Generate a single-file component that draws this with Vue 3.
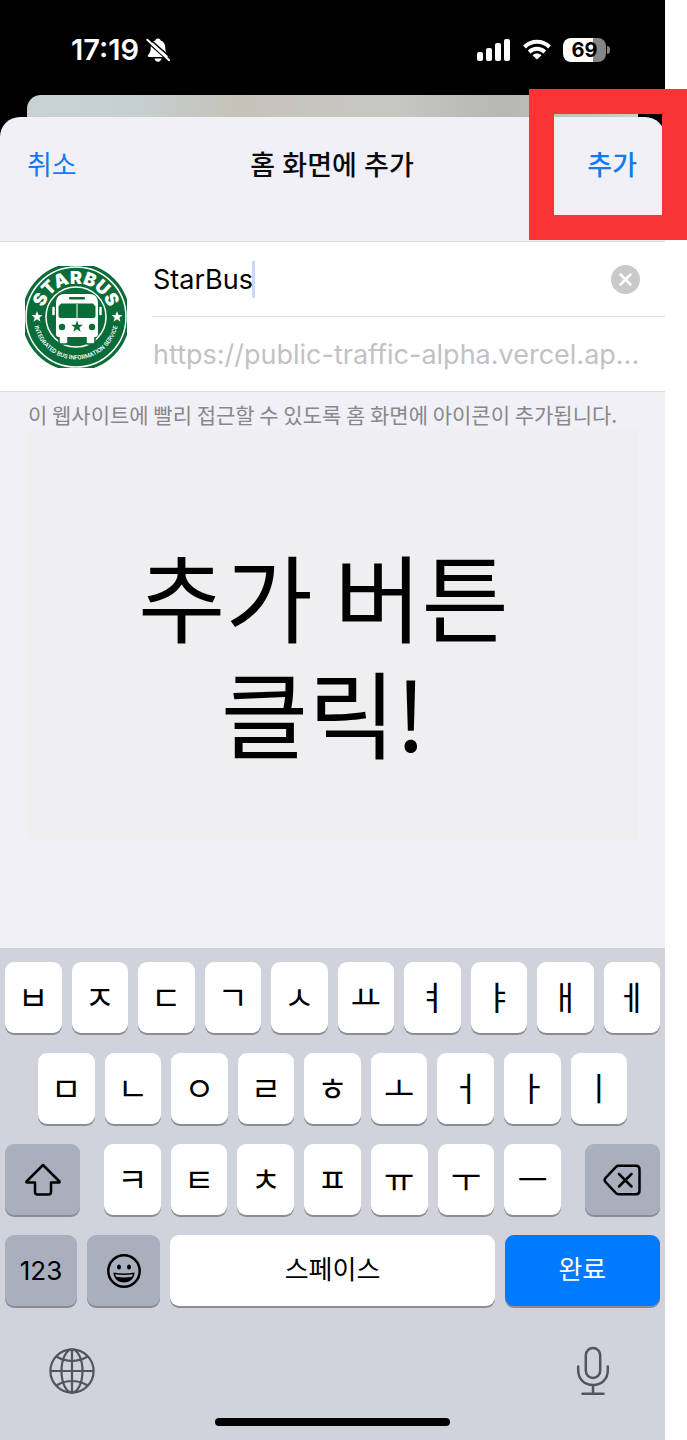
<script setup>
import { ref } from 'vue'

const name = ref('StarBus')
const rowOne = ['ㅂ', 'ㅈ', 'ㄷ', 'ㄱ', 'ㅅ', 'ㅛ', 'ㅕ', 'ㅑ', 'ㅐ', 'ㅔ']
const rowTwo = ['ㅁ', 'ㄴ', 'ㅇ', 'ㄹ', 'ㅎ', 'ㅗ', 'ㅓ', 'ㅏ', 'ㅣ']
const rowThree = ['ㅋ', 'ㅌ', 'ㅊ', 'ㅍ', 'ㅠ', 'ㅜ', 'ㅡ']
</script>

<template>
  <div class="page">
    <main class="phone">
      <div class="status">
        <div class="clock">
          <span>17:19</span>
          <svg width="24" height="26" viewBox="0 0 24 26" aria-hidden="true">
            <path d="M12 1.500c1.400 0 2.400.8 2.700 2 3 1 4.600 3.700 4.600 7 0 4.300 1 5.500 2.500 7.300.7 1 .3 2.200-1 2.200H3.200c-1.300 0-1.700-1.200-1-2.200C3.700 16 4.700 14.800 4.700 10.500c0-3.300 1.600-6 4.600-7 .3-1.200 1.300-2 2.700-2zM8.500 21.500h7c-.3 1.900-1.600 3.200-3.500 3.200s-3.200-1.300-3.500-3.200z" fill="#fff" />
            <path d="M.5 4.500L23 24.500M2.500 1L25 21" stroke="#000" stroke-width="1.500" />
            <path d="M1.300 2.700L23.200 23.300" stroke="#fff" stroke-width="2" stroke-linecap="round" />
          </svg>
        </div>
        <div class="signals">
          <svg width="34" height="22" viewBox="0 0 34 22" fill="#fff" aria-hidden="true">
            <rect x="0" y="13" width="6" height="9" rx="2" />
            <rect x="9" y="9" width="6" height="13" rx="2" />
            <rect x="18" y="4" width="6" height="18" rx="2" />
            <rect x="27" y="0" width="6" height="22" rx="2" />
          </svg>
          <svg width="28" height="21" viewBox="0 0 28 21" fill="none" stroke="#fff" stroke-width="4" aria-hidden="true">
            <path d="M1.500 8C8.500 1 19.500 1 26.500 8" />
            <path d="M6.200 13C10.600 8.800 17.400 8.800 21.800 13" />
            <path d="M14 20.500l-4.500-4.300c2.600-2.300 6.400-2.300 9 0z" fill="#fff" stroke="none" />
          </svg>
          <div class="battery"><span>69</span></div>
        </div>
      </div>
      <div class="behind"></div>

      <section class="sheet">
        <header class="bar">
          <button class="action" type="button">취소</button>
          <h1>홈 화면에 추가</h1>
          <button class="action strong" type="button">추가</button>
        </header>

        <form class="form" @submit.prevent>
          <svg class="logo" viewBox="0 0 102 102" role="img" aria-label="StarBus">
            <defs>
              <path id="arc-top" d="M17.500 51A33.500 33.500 0 0 1 84.500 51" />
              <path id="arc-bottom" d="M8.500 51A42.500 42.500 0 0 0 93.500 51" />
            </defs>
            <circle cx="51" cy="51" r="54" fill="#0a6c38" />
            <circle cx="51" cy="51" r="50" fill="none" stroke="#fff" stroke-width="1.500" />
            <circle cx="51" cy="51" r="30" fill="none" stroke="#fff" stroke-width="1.500" />
            <text class="logo-name" text-anchor="middle"><textPath href="#arc-top" startOffset="50%">STARBUS</textPath></text>
            <text class="logo-tag" text-anchor="middle"><textPath href="#arc-bottom" startOffset="50%">INTEGRATED BUS INFORMATION SERVICE</textPath></text>
            <path id="star" d="M12 45l1.400 4 4.200.1-3.300 2.600 1.200 4-3.500-2.400-3.500 2.400 1.200-4-3.300-2.600 4.200-.1z" fill="#fff" />
            <use href="#star" x="80" />
            <g stroke="#0a6c38" stroke-width="1.500">
              <rect x="26.500" y="40" width="4" height="10" rx="1.500" fill="#fff" />
              <rect x="73.500" y="40" width="4" height="10" rx="1.500" fill="#fff" />
              <rect x="34" y="69" width="9" height="9" rx="2" fill="#fff" />
              <rect x="61" y="69" width="9" height="9" rx="2" fill="#fff" />
            </g>
            <path d="M31 37q0-9 9-9h24q9 0 9 9v31q0 3-3 3H34q-3 0-3-3z" fill="#fff" />
            <g fill="#0a6c38">
              <rect x="44" y="31" width="16" height="2.500" rx="1" />
              <path d="M36 37.500h32l2.500 3v9.500q0 2-2 2h-33q-2 0-2-2v-9.500z" />
              <circle cx="37" cy="61" r="3.200" />
              <circle cx="67" cy="61" r="3.200" />
              <path d="M52 54.500l1.500 4.200 4.400.1-3.500 2.700 1.300 4.300-3.700-2.500-3.700 2.500 1.300-4.300-3.500-2.700 4.400-.1z" />
            </g>
            <path d="M52 38v14" stroke="#fff" stroke-width="1" />
          </svg>
          <div class="fields">
            <div class="field">
              <input v-model="name" type="text" aria-label="이름" />
              <span class="caret"></span>
              <button class="clear" type="button" aria-label="지우기" @click="name = ''">
                <svg width="29" height="29" viewBox="0 0 29 29" aria-hidden="true">
                  <circle cx="14.500" cy="14.500" r="14.500" fill="#c9c9ca" />
                  <path d="M9.500 9.500l10 10M19.500 9.500l-10 10" stroke="#fff" stroke-width="2.500" stroke-linecap="round" />
                </svg>
              </button>
            </div>
            <div class="field url"><span>https://public-traffic-alpha.vercel.ap...</span></div>
          </div>
        </form>

        <p class="hint">이 웹사이트에 빨리 접근할 수 있도록 홈 화면에 아이콘이 추가됩니다.</p>
        <div class="note"><p>추가 버튼<br />클릭!</p></div>
      </section>

      <section class="keyboard">
        <div class="row">
          <button v-for="k in rowOne" :key="k" class="key jamo" type="button">{{ k }}</button>
        </div>
        <div class="row inset">
          <button v-for="k in rowTwo" :key="k" class="key jamo" type="button">{{ k }}</button>
        </div>
        <div class="row shift-row">
          <button class="key dark" type="button" aria-label="Shift">
            <svg width="36" height="34" viewBox="0 0 36 34" fill="none" stroke="#000" stroke-width="2.500" stroke-linejoin="round" aria-hidden="true">
              <path d="M18 2L34.500 18.500q.5 1-.7 1H26V29q0 2.500-2.500 2.500h-11Q10 31.500 10 29v-9.500H2.200q-1.200 0-.7-1z" />
            </svg>
          </button>
          <div class="letters">
            <button v-for="k in rowThree" :key="k" class="key jamo" type="button">{{ k }}</button>
          </div>
          <button class="key dark" type="button" aria-label="삭제">
            <svg width="38" height="32" viewBox="0 0 38 32" fill="none" stroke="#000" stroke-width="2.500" stroke-linejoin="round" stroke-linecap="round" aria-hidden="true">
              <path d="M15.500 1.800H33q3.500 0 3.500 3.500v21.400q0 3.500-3.500 3.500H15.500q-1.500 0-2.500-1L2.500 18q-1.800-2 0-4L13 2.800q1-1 2.500-1z" />
              <path d="M16 10l12.500 12.500M28.500 10L16 22.500" />
            </svg>
          </button>
        </div>
        <div class="row bottom-row">
          <button class="key dark digits" type="button">123</button>
          <button class="key dark" type="button" aria-label="이모티콘">
            <svg width="34" height="34" viewBox="0 0 34 34" aria-hidden="true">
              <circle cx="17" cy="17" r="15.700" fill="none" stroke="#000" stroke-width="2.500" />
              <ellipse cx="12" cy="13" rx="2" ry="2.500" />
              <ellipse cx="22" cy="13" rx="2" ry="2.500" />
              <path d="M6.500 18.500q10.500 2.200 21 0c0 6-4.500 10-10.500 10s-10.500-4-10.500-10z" />
              <path d="M8.300 20.200q8.700 1.600 17.400 0-.2 1.500-.7 2.500-8 1.500-16 0-.5-1-.7-2.500z" fill="#a9afbc" />
            </svg>
          </button>
          <button class="key word" type="button">스페이스</button>
          <button class="key word done" type="button">완료</button>
        </div>
        <div class="tools">
          <button class="tool" type="button" aria-label="언어">
            <svg width="46" height="46" viewBox="0 0 46 46" fill="none" stroke="#50555e" stroke-width="2.200" aria-hidden="true">
              <circle cx="23" cy="23" r="21.600" />
              <ellipse cx="23" cy="23" rx="10.500" ry="21.600" />
              <path d="M23 1.400v43.200M1.400 23h43.200M7.300 8.500q15.700 9 31.400 0M7.300 37.500q15.700-9 31.400 0" />
            </svg>
          </button>
          <button class="tool" type="button" aria-label="받아쓰기">
            <svg width="34" height="50" viewBox="0 0 34 50" fill="none" stroke="#50555e" stroke-width="2.500" stroke-linecap="round" aria-hidden="true">
              <rect x="9.800" y="2" width="14.400" height="30" rx="7.200" />
              <path d="M2.200 20.500V24c0 9 6 15 14.800 15s14.800-6 14.800-15v-3.500M17 39v8.500M6.500 47.700h21" />
            </svg>
          </button>
        </div>
        <div class="home"></div>
      </section>
    </main>
    <div class="highlight"></div>
  </div>
</template>

<style>
body {
  margin: 0;
  background: #fff;
}
</style>

<style scoped>
* {
  box-sizing: border-box;
}
.page {
  position: relative;
  padding-right: 22px;
  font-family: Inter, "Noto Sans CJK KR", sans-serif;
}
.phone {
  background: #000;
}
button {
  margin: 0;
  padding: 0;
  border: 0;
  background: none;
  font-family: inherit;
  color: inherit;
}
svg {
  display: block;
  flex: none;
}
.status {
  display: flex;
  justify-content: space-between;
  align-items: center;
  height: 95px;
  padding: 4px 59px 0 71px;
  color: #fff;
}
.clock {
  display: flex;
  align-items: center;
  gap: 7px;
  font-size: 29px;
  font-weight: 600;
}
.signals {
  display: flex;
  align-items: center;
  gap: 12px;
}
.battery {
  position: relative;
  width: 43px;
  height: 24px;
  border-radius: 8px;
  background: linear-gradient(90deg, #fff 69%, #858585 69%);
  color: #000;
  font-size: 20px;
  font-weight: 700;
  line-height: 24px;
  text-align: center;
}
.battery::after {
  content: "";
  position: absolute;
  left: 44px;
  top: 8px;
  width: 3px;
  height: 8px;
  border-radius: 0 3px 3px 0;
  background: #858585;
}
.behind {
  height: 22px;
  margin: 0 27px;
  border-radius: 14px 14px 0 0;
  background: linear-gradient(90deg, #c8d2d4 0%, #c6cfd0 18%, #c5c2ba 34%, #c7c7c2 60%, #b6b7b2 78%, #cbd0cb 100%);
}
.sheet {
  border-radius: 20px 20px 0 0;
  background: #f1f0f6;
  padding-bottom: 109px;
}
.bar {
  display: flex;
  justify-content: space-between;
  align-items: center;
  height: 124px;
  padding: 0 28px 32px 27px;
}
.bar h1 {
  margin: 0;
  font-size: 27px;
  font-weight: 500;
  color: #0b0b0c;
}
.action {
  color: #1479ee;
  font-size: 27px;
}
.strong {
  font-weight: 500;
}
.form {
  display: flex;
  gap: 26px;
  align-items: center;
  height: 151px;
  padding-left: 25px;
  border-top: 1px solid #dadae0;
  border-bottom: 1px solid #dadae0;
  background: #fff;
}
.logo {
  width: 102px;
  height: 102px;
  overflow: hidden;
}
.logo-name {
  font-family: Inter, sans-serif;
  font-size: 18px;
  font-weight: 900;
  fill: #fff;
}
.logo-tag {
  font-family: Roboto, sans-serif;
  font-size: 6px;
  font-weight: 500;
  fill: #fff;
}
.fields {
  flex: 1;
  min-width: 0;
}
.field {
  display: flex;
  align-items: center;
  height: 74px;
  padding-right: 25px;
  font-size: 27px;
}
.field + .field {
  height: 75px;
  border-top: 1px solid #dadae0;
}
.field input {
  field-sizing: content;
  margin: 0;
  padding: 0;
  border: 0;
  outline: 0;
  background: none;
  color: #000;
  font: inherit;
}
.caret {
  width: 3px;
  height: 37px;
  margin-left: -1px;
  background: #cfd6fc;
}
.clear {
  margin-left: auto;
}
.url {
  color: #c2c2c5;
  white-space: nowrap;
}
.hint {
  margin: 0;
  padding: 6px 28px 0;
  height: 38px;
  font-family: "Noto Sans CJK KR", sans-serif;
  font-size: 21px;
  line-height: 32px;
  color: #87878c;
  white-space: nowrap;
}
.note {
  display: flex;
  justify-content: center;
  align-items: center;
  height: 409px;
  margin: 0 27px;
  background: #efeff1;
}
.note p {
  margin: 0 18px 0 0;
  padding-top: 36px;
  font-family: "Noto Sans CJK KR", sans-serif;
  font-size: 95px;
  line-height: 116px;
  text-align: center;
  color: #000;
}
.keyboard {
  background: #d0d3dc;
  padding: 14px 5px;
}
.row {
  display: flex;
  gap: 10px;
  margin-bottom: 20px;
}
.inset {
  padding: 0 33px;
}
.key {
  display: flex;
  flex: 1 1 0;
  justify-content: center;
  align-items: center;
  min-width: 0;
  height: 71px;
  border-radius: 9px;
  background: #fff;
  box-shadow: 0 2px 0 #8b8d92;
  color: #000;
}
.jamo {
  padding-bottom: 4px;
  font-size: 33px;
}
.dark {
  background: #a9afbc;
}
.shift-row {
  display: grid;
  grid-template-columns: 75fr 456fr 75fr;
  gap: 24px;
}
.letters {
  display: flex;
  gap: 10px;
}
.bottom-row {
  display: grid;
  grid-template-columns: 72fr 73fr 324fr 155fr;
}
.digits {
  font-size: 26px;
}
.word {
  padding-bottom: 6px;
  font-size: 26px;
}
.done {
  background: #007aff;
  color: #fff;
}
.tools {
  display: flex;
  justify-content: space-between;
  align-items: center;
  padding: 20px 50px 0 44px;
}
.home {
  width: 36%;
  height: 8px;
  margin: 22px auto 0;
  border-radius: 4px;
  background: #000;
}
.highlight {
  position: absolute;
  top: 89px;
  right: 0;
  width: 158px;
  height: 151px;
  border: 25px solid #f93434;
  pointer-events: none;
}
</style>
